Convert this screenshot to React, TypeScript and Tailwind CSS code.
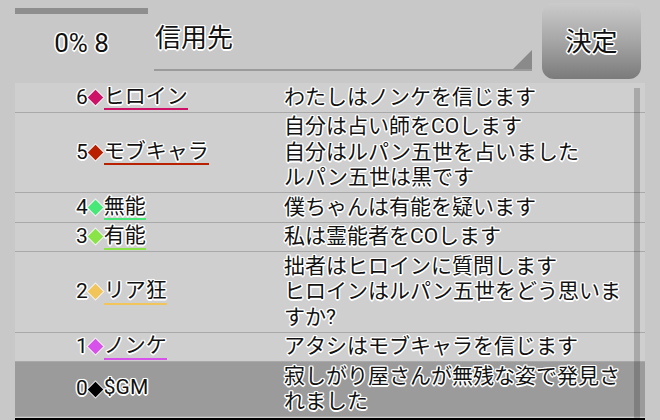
import React from "react";

const outline =
  "[text-shadow:-1px_-1px_0_#fff,1px_-1px_0_#fff,-1px_1px_0_#fff,1px_1px_0_#fff,0_1.5px_0_#fff,0_-1.5px_0_#fff,1.5px_0_0_#fff,-1.5px_0_0_#fff,0_0_2px_#fff]";

type Row = {
  n: number;
  name: string;
  diamond: string;
  line: string;
  msg: string;
  bg: string;
};

const rows: Row[] = [
  { n: 6, name: "ヒロイン", diamond: "bg-[#cc1166]", line: "border-[#cc1166]", msg: "わたしはノンケを信じます", bg: "bg-[#cfcfcf]" },
  { n: 5, name: "モブキャラ", diamond: "bg-[#b82000]", line: "border-[#b82000]", msg: "自分は占い師をCOします\n自分はルパン五世を占いました\nルパン五世は黒です", bg: "bg-[#cfcfcf]" },
  { n: 4, name: "無能", diamond: "bg-[#48e878]", line: "border-[#48e878]", msg: "僕ちゃんは有能を疑います", bg: "bg-[#cfcfcf]" },
  { n: 3, name: "有能", diamond: "bg-[#8ae448]", line: "border-[#8ae448]", msg: "私は霊能者をCOします", bg: "bg-[#cfcfcf]" },
  { n: 2, name: "リア狂", diamond: "bg-[#f2c55a]", line: "border-[#f2c55a]", msg: "拙者はヒロインに質問します\nヒロインはルパン五世をどう思いますか?", bg: "bg-[#cfcfcf]" },
  { n: 1, name: "ノンケ", diamond: "bg-[#d752ea]", line: "border-[#d752ea]", msg: "アタシはモブキャラを信じます", bg: "bg-[#cfcfcf]" },
  { n: 0, name: "$GM", diamond: "bg-[#000000]", line: "border-transparent", msg: "寂しがり屋さんが無残な姿で発見されました", bg: "bg-[#9b9b9b]" },
];

export default function App() {
  return (
    <div className="w-[660px] h-[420px] overflow-hidden bg-[#c8c8c8] px-[15px] text-[#111] font-['Roboto','Noto_Sans_CJK_JP',sans-serif]">
      {/* header */}
      <div className="flex h-[83px]">
        <div className="w-[133px] flex flex-col items-center">
          <div className="mt-[8px] h-[6px] w-full bg-[#8e8e8e]" />
          <div className={`mt-[14px] text-[26px] leading-[30px] ${outline}`}>0% 8</div>
        </div>
        <div className="ml-[6px] w-[378px] h-[71px] relative border-b-2 border-[#9b9b9b]">
          <div className={`pl-[1px] pt-[23px] text-[26px] leading-[30px] ${outline}`}>信用先</div>
          <svg className="absolute right-0 bottom-0" width="19" height="19" viewBox="0 0 19 19">
            <polygon points="19,0 19,19 0,19" fill="#8a8a8a" />
          </svg>
        </div>
        <div className="ml-[10px] mt-[3px] w-[99px] h-[76px] rounded-[12px] bg-linear-to-b from-[#cbcbcb] via-[#a6a6a6] to-[#7b7b7b] flex items-center justify-center">
          <span className={`mt-[2px] text-[26px] leading-[30px] ${outline}`}>決定</span>
        </div>
      </div>
      {/* list */}
      <div className="relative h-[335px] overflow-hidden bg-[#cfcfcf]">
        {rows.map((r) => (
          <div key={r.n} className={`flex border-b border-[#a9a9a9] py-[1.5px] text-[21px] leading-[25.5px] ${r.bg}`}>
            <div className="w-[269px] shrink-0 flex items-center pl-[61px]">
              <span className={outline}>{r.n}</span>
              <span className="w-[15px] h-[15px] flex items-center justify-center">
                <span className={`w-[11px] h-[11px] rotate-45 ${r.diamond} shadow-[0_0_0_1px_rgba(255,255,255,0.7)]`} />
              </span>
              <span className={`inline-block ml-[1px] leading-[23.5px] border-b-2 ${r.line} ${outline}`}>{r.name}</span>
            </div>
            <div className={`w-[346px] whitespace-pre-line ${outline}`}>{r.msg}</div>
          </div>
        ))}
        <div className="absolute right-[5px] top-[5px] bottom-0 w-[6px] bg-[rgba(0,0,0,0.18)]" />
      </div>
      <div className="h-[2px] bg-black" />
    </div>
  );
}
